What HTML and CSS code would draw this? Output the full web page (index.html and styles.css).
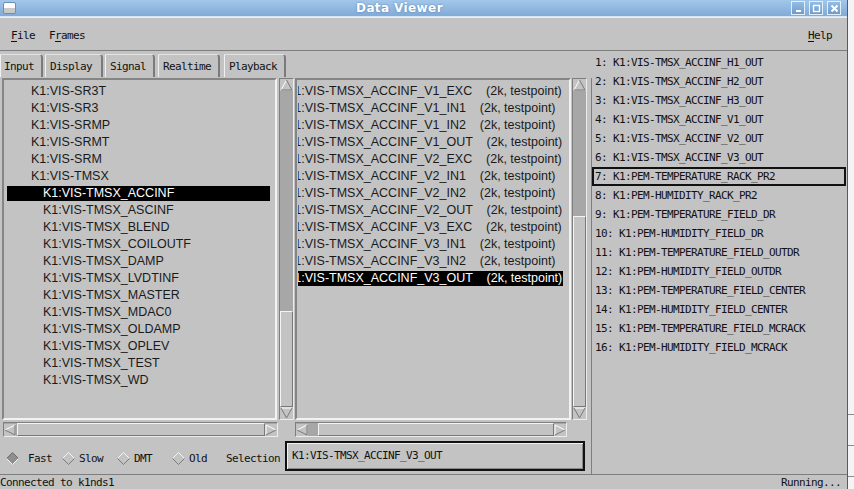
FILE: index.html
```html
<!DOCTYPE html>
<html>
<head>
  <meta charset="UTF-8">
  <link rel="stylesheet" href="styles.css">
</head>
<body>
  <div class="window">
    <div class="titlebar">
      <span class="winmenu"></span>
      <span class="title">Data Viewer</span>
      <span class="winbtns">
        <span class="wbtn"><svg width="11" height="11" viewBox="0 0 11 11"><rect x="3" y="7" width="5" height="2" fill="#fff"/></svg></span>
        <span class="wbtn"><svg width="11" height="11" viewBox="0 0 11 11"><rect x="2.5" y="2.5" width="6" height="6" fill="none" stroke="#fff" stroke-width="1.4"/></svg></span>
        <span class="wbtn"><svg width="11" height="11" viewBox="0 0 11 11"><path d="M2.5 2.5 L8.5 8.5 M8.5 2.5 L2.5 8.5" stroke="#fff" stroke-width="2"/></svg></span>
      </span>
    </div>

    <div class="menubar">
      <span class="menu"><u>F</u>ile</span>
      <span class="menu">F<u>r</u>ames</span>
      <span class="spacer"></span>
      <span class="menu"><u>H</u>elp</span>
    </div>

    <div class="main">
      <div class="leftside">
        <div class="tabs">
          <span class="tab">Input</span>
          <span class="tab">Display</span>
          <span class="tab active">Signal</span>
          <span class="tab">Realtime</span>
          <span class="tab">Playback</span>
        </div>

        <div class="lists">
          <div class="list channels">
            <div class="row">K1:VIS-SR3T</div>
            <div class="row">K1:VIS-SR3</div>
            <div class="row">K1:VIS-SRMP</div>
            <div class="row">K1:VIS-SRMT</div>
            <div class="row">K1:VIS-SRM</div>
            <div class="row">K1:VIS-TMSX</div>
            <div class="row child selected">K1:VIS-TMSX_ACCINF</div>
            <div class="row child">K1:VIS-TMSX_ASCINF</div>
            <div class="row child">K1:VIS-TMSX_BLEND</div>
            <div class="row child">K1:VIS-TMSX_COILOUTF</div>
            <div class="row child">K1:VIS-TMSX_DAMP</div>
            <div class="row child">K1:VIS-TMSX_LVDTINF</div>
            <div class="row child">K1:VIS-TMSX_MASTER</div>
            <div class="row child">K1:VIS-TMSX_MDAC0</div>
            <div class="row child">K1:VIS-TMSX_OLDAMP</div>
            <div class="row child">K1:VIS-TMSX_OPLEV</div>
            <div class="row child">K1:VIS-TMSX_TEST</div>
            <div class="row child">K1:VIS-TMSX_WD</div>
          </div>

          <div class="vscroll">
            <span class="arrow"><svg width="13" height="12" viewBox="0 0 13 12"><polygon points="6.5,1 12,11 1,11" fill="#c3c3c3"/><polyline points="1,11 6.5,1" fill="none" stroke="#fff"/><polyline points="6.5,1 12,11 1,11" fill="none" stroke="#7a7a7a"/></svg></span>
            <span class="trough"></span>
            <span class="thumb" style="height: 96px"></span>
            <span class="arrow"><svg width="13" height="12" viewBox="0 0 13 12"><polygon points="1,1 12,1 6.5,11" fill="#c3c3c3"/><polyline points="1,1 12,1" fill="none" stroke="#fff"/><polyline points="1,1 6.5,11 12,1" fill="none" stroke="#7a7a7a"/></svg></span>
          </div>

          <div class="list signals">
            <div class="row">K1:VIS-TMSX_ACCINF_V1_EXC    (2k, testpoint)</div>
            <div class="row">K1:VIS-TMSX_ACCINF_V1_IN1    (2k, testpoint)</div>
            <div class="row">K1:VIS-TMSX_ACCINF_V1_IN2    (2k, testpoint)</div>
            <div class="row">K1:VIS-TMSX_ACCINF_V1_OUT    (2k, testpoint)</div>
            <div class="row">K1:VIS-TMSX_ACCINF_V2_EXC    (2k, testpoint)</div>
            <div class="row">K1:VIS-TMSX_ACCINF_V2_IN1    (2k, testpoint)</div>
            <div class="row">K1:VIS-TMSX_ACCINF_V2_IN2    (2k, testpoint)</div>
            <div class="row">K1:VIS-TMSX_ACCINF_V2_OUT    (2k, testpoint)</div>
            <div class="row">K1:VIS-TMSX_ACCINF_V3_EXC    (2k, testpoint)</div>
            <div class="row">K1:VIS-TMSX_ACCINF_V3_IN1    (2k, testpoint)</div>
            <div class="row">K1:VIS-TMSX_ACCINF_V3_IN2    (2k, testpoint)</div>
            <div class="row selected">K1:VIS-TMSX_ACCINF_V3_OUT    (2k, testpoint)</div>
          </div>

          <div class="vscroll">
            <span class="arrow"><svg width="13" height="12" viewBox="0 0 13 12"><polygon points="6.5,1 12,11 1,11" fill="#c3c3c3"/><polyline points="1,11 6.5,1" fill="none" stroke="#fff"/><polyline points="6.5,1 12,11 1,11" fill="none" stroke="#7a7a7a"/></svg></span>
            <span class="trough"></span>
            <span class="thumb" style="height: 191px"></span>
            <span class="arrow"><svg width="13" height="12" viewBox="0 0 13 12"><polygon points="1,1 12,1 6.5,11" fill="#c3c3c3"/><polyline points="1,1 12,1" fill="none" stroke="#fff"/><polyline points="1,1 6.5,11 12,1" fill="none" stroke="#7a7a7a"/></svg></span>
          </div>

          <div class="hscroll left-h">
            <span class="arrow"><svg width="12" height="12" viewBox="0 0 12 12"><polygon points="1,6 11,1 11,11" fill="#c3c3c3"/><polyline points="11,1 1,6" fill="none" stroke="#fff"/><polyline points="1,6 11,11 11,1" fill="none" stroke="#7a7a7a"/></svg></span>
            <span class="trough" style="flex: 0 0 1px"></span>
            <span class="thumb"></span>
            <span class="arrow"><svg width="12" height="12" viewBox="0 0 12 12"><polygon points="1,1 11,6 1,11" fill="#c3c3c3"/><polyline points="1,11 1,1 11,6" fill="none" stroke="#fff"/><polyline points="11,6 1,11" fill="none" stroke="#7a7a7a"/></svg></span>
          </div>

          <div class="hscroll mid-h">
            <span class="arrow"><svg width="12" height="12" viewBox="0 0 12 12"><polygon points="1,6 11,1 11,11" fill="#c3c3c3"/><polyline points="11,1 1,6" fill="none" stroke="#fff"/><polyline points="1,6 11,11 11,1" fill="none" stroke="#7a7a7a"/></svg></span>
            <span class="trough" style="flex: 0 0 10px"></span>
            <span class="thumb"></span>
            <span class="arrow"><svg width="12" height="12" viewBox="0 0 12 12"><polygon points="1,1 11,6 1,11" fill="#c3c3c3"/><polyline points="1,11 1,1 11,6" fill="none" stroke="#fff"/><polyline points="11,6 1,11" fill="none" stroke="#7a7a7a"/></svg></span>
          </div>
        </div>

        <div class="controls">
          <span class="radio on">
            <svg width="13" height="13" viewBox="0 0 13 13"><polygon points="6.5,0.5 12.5,6.5 6.5,12.5 0.5,6.5" fill="#8e8e8e"/><polyline points="0.5,6.5 6.5,0.5 12.5,6.5" fill="none" stroke="#6e6e6e"/><polyline points="0.5,6.5 6.5,12.5 12.5,6.5" fill="none" stroke="#f4f4f4"/></svg>
            Fast
          </span>
          <span class="radio">
            <svg width="13" height="13" viewBox="0 0 13 13"><polygon points="6.5,0.5 12.5,6.5 6.5,12.5 0.5,6.5" fill="#c3c3c3"/><polyline points="0.5,6.5 6.5,0.5 12.5,6.5" fill="none" stroke="#f4f4f4"/><polyline points="0.5,6.5 6.5,12.5 12.5,6.5" fill="none" stroke="#7a7a7a"/></svg>
            Slow
          </span>
          <span class="radio">
            <svg width="13" height="13" viewBox="0 0 13 13"><polygon points="6.5,0.5 12.5,6.5 6.5,12.5 0.5,6.5" fill="#c3c3c3"/><polyline points="0.5,6.5 6.5,0.5 12.5,6.5" fill="none" stroke="#f4f4f4"/><polyline points="0.5,6.5 6.5,12.5 12.5,6.5" fill="none" stroke="#7a7a7a"/></svg>
            DMT
          </span>
          <span class="radio">
            <svg width="13" height="13" viewBox="0 0 13 13"><polygon points="6.5,0.5 12.5,6.5 6.5,12.5 0.5,6.5" fill="#c3c3c3"/><polyline points="0.5,6.5 6.5,0.5 12.5,6.5" fill="none" stroke="#f4f4f4"/><polyline points="0.5,6.5 6.5,12.5 12.5,6.5" fill="none" stroke="#7a7a7a"/></svg>
            Old
          </span>
          <span class="sel-label">Selection</span>
          <div class="sel-box">K1:VIS-TMSX_ACCINF_V3_OUT</div>
        </div>
      </div>

      <div class="picked">
        <div class="prow">1: K1:VIS-TMSX_ACCINF_H1_OUT</div>
        <div class="prow">2: K1:VIS-TMSX_ACCINF_H2_OUT</div>
        <div class="prow">3: K1:VIS-TMSX_ACCINF_H3_OUT</div>
        <div class="prow">4: K1:VIS-TMSX_ACCINF_V1_OUT</div>
        <div class="prow">5: K1:VIS-TMSX_ACCINF_V2_OUT</div>
        <div class="prow">6: K1:VIS-TMSX_ACCINF_V3_OUT</div>
        <div class="prow boxed">7: K1:PEM-TEMPERATURE_RACK_PR2</div>
        <div class="prow">8: K1:PEM-HUMIDITY_RACK_PR2</div>
        <div class="prow">9: K1:PEM-TEMPERATURE_FIELD_DR</div>
        <div class="prow">10: K1:PEM-HUMIDITY_FIELD_DR</div>
        <div class="prow">11: K1:PEM-TEMPERATURE_FIELD_OUTDR</div>
        <div class="prow">12: K1:PEM-HUMIDITY_FIELD_OUTDR</div>
        <div class="prow">13: K1:PEM-TEMPERATURE_FIELD_CENTER</div>
        <div class="prow">14: K1:PEM-HUMIDITY_FIELD_CENTER</div>
        <div class="prow">15: K1:PEM-TEMPERATURE_FIELD_MCRACK</div>
        <div class="prow">16: K1:PEM-HUMIDITY_FIELD_MCRACK</div>
      </div>
    </div>

    <div class="statusbar">
      <span>Connected to k1nds1</span>
      <span>Running...</span>
    </div>
  </div>
  <div class="desk"></div>
</body>
</html>
```

FILE: styles.css
```css
* {
  margin: 0;
  padding: 0;
  box-sizing: border-box;
}

body {
  width: 854px;
  height: 489px;
  overflow: hidden;
  display: flex;
  background: #f2f2f2;
  font-family: "DejaVu Sans Mono", monospace;
  font-size: 11px;
  letter-spacing: -0.62px;
  color: #111;
}

.window {
  width: 848px;
  height: 489px;
  flex: 0 0 848px;
  display: flex;
  flex-direction: column;
  background: #c3c3c3;
  border-right: 1px solid #5a5a5a;
}

.desk {
  flex: 1;
  background:
    linear-gradient(#8a8a8a, #8a8a8a) 0 414px / 100% 1px no-repeat,
    linear-gradient(#8a8a8a, #8a8a8a) 0 445px / 100% 1px no-repeat,
    linear-gradient(#8a8a8a, #8a8a8a) 0 476px / 100% 1px no-repeat,
    #f4f4f4;
}

/* title bar */
.titlebar {
  height: 17px;
  flex: 0 0 17px;
  display: flex;
  align-items: center;
  background: linear-gradient(#a3c7ea, #80aad8);
  border-bottom: 1px solid #d8e6f3;
}

.winmenu {
  width: 13px;
  height: 12px;
  margin-left: 3px;
  border-radius: 2px;
  background: linear-gradient(#ffffff 55%, #c9c9c9 55%);
  border: 1px solid #6d8fb3;
}

.title {
  flex: 1;
  text-align: center;
  font-family: "DejaVu Sans", sans-serif;
  font-weight: bold;
  font-size: 12px;
  letter-spacing: 0.4px;
  color: #fff;
  text-shadow: 0 0 2px rgba(40, 80, 130, 0.6);
  padding-right: 8px;
}

.winbtns {
  display: flex;
  gap: 4px;
  margin-right: 6px;
}

.wbtn {
  width: 14px;
  height: 14px;
  display: flex;
  align-items: center;
  justify-content: center;
  background: linear-gradient(#94bde6, #6f9acb);
  border: 1px solid #e4eef8;
}

/* menu bar */
.menubar {
  height: 34px;
  flex: 0 0 34px;
  display: flex;
  align-items: center;
  padding: 3px 15px 0 11px;
  gap: 14px;
  border-top: 1px solid #ececec;
  border-bottom: 1px solid #7e7e7e;
}

.menu u {
  text-decoration-thickness: 1px;
  text-underline-offset: 2px;
}

.spacer {
  flex: 1;
}

/* main area */
.main {
  flex: 1;
  display: flex;
  min-height: 0;
}

.leftside {
  width: 590px;
  flex: 0 0 590px;
  display: flex;
  flex-direction: column;
}

.tabs {
  height: 27px;
  flex: 0 0 27px;
  display: flex;
  align-items: flex-end;
  gap: 2px;
  padding-bottom: 1px;
}

.tab {
  height: 23px;
  line-height: 23px;
  padding: 0 7px 0 4px;
  border-left: 1px solid #f0f0f0;
  border-top: 1px solid #e4e4e4;
  border-right: 2px solid #7a7a7a;
  border-top-right-radius: 4px;
}

.tab:nth-child(1) {
  padding-left: 3px;
}

.tab:nth-child(2) {
  padding-right: 9px;
}

.tab:nth-child(4) {
  margin-left: 1px;
}

.tab:nth-child(5) {
  margin-left: 2px;
}

.lists {
  display: grid;
  grid-template-columns: 276px 15px 276px 15px;
  grid-template-rows: 342px 15px;
  column-gap: 1px;
  row-gap: 2px;
  padding-left: 2px;
}

.list {
  border: 2px solid;
  border-color: #858585 #f2f2f2 #f2f2f2 #858585;
  padding-top: 4px;
  overflow: hidden;
  font-family: "Liberation Sans", Arial, sans-serif;
  font-size: 12.5px;
  letter-spacing: 0;
  color: #1a1a1a;
}

.channels {
  margin-right: 1px;
}

.row {
  height: 15px;
  line-height: 15px;
  margin-bottom: 2px;
  white-space: pre;
  overflow: hidden;
}

.channels .row {
  margin-left: 3px;
  margin-right: 5px;
  padding-left: 24px;
}

.channels .row.child {
  padding-left: 36px;
}

.signals .row {
  margin-left: 1px;
  margin-right: 6px;
  text-indent: -12px;
}

.row.selected {
  background: #000;
  color: #fff;
}

/* scrollbars */
.vscroll,
.hscroll {
  display: flex;
  background: #a7a7a7;
  border: 1px solid;
  border-color: #7e7e7e #ececec #ececec #7e7e7e;
}

.vscroll {
  flex-direction: column;
  align-items: center;
}

.vscroll .arrow {
  height: 12px;
  flex: 0 0 12px;
  display: flex;
  background: #c3c3c3;
}

.trough {
  flex: 1;
}

.thumb {
  flex: 0 0 auto;
  width: 13px;
  background: #c3c3c3;
  border: 1px solid;
  border-color: #f4f4f4 #777 #777 #f4f4f4;
}

.hscroll {
  align-items: center;
  height: 15px;
}

.hscroll .arrow {
  width: 12px;
  flex: 0 0 12px;
  display: flex;
  background: #c3c3c3;
}

.hscroll .thumb {
  flex: 1;
  width: auto;
  height: 13px;
}

.left-h {
  grid-column: 1;
  margin-left: 1px;
}

.mid-h {
  grid-column: 3;
  margin-right: 4px;
}

/* bottom controls */
.controls {
  flex: 1;
  display: flex;
  align-items: center;
  padding-left: 6px;
}

.radio {
  width: 55px;
  display: flex;
  align-items: center;
  gap: 4px;
  padding-top: 6px;
}

.radio.on {
  width: 56px;
  gap: 9px;
}

.sel-label {
  margin-left: -1px;
  padding-top: 6px;
}

.sel-box {
  width: 300px;
  height: 30px;
  margin-left: 5px;
  padding-left: 5px;
  display: flex;
  align-items: center;
  border: 2px solid #111;
  box-shadow: inset 1px 1px 0 #f0f0f0, inset -1px -1px 0 #888;
}

/* selected channels */
.picked {
  flex: 1;
  position: relative;
  padding-top: 2px;
}

.picked::before {
  content: '';
  position: absolute;
  left: 1px;
  top: 27px;
  bottom: 0;
  border-left: 1px solid #7e7e7e;
}

.prow {
  height: 19px;
  line-height: 19px;
  margin: 0 1px 0 2px;
  padding-left: 3px;
  white-space: pre;
}

.prow.boxed {
  box-shadow: inset 0 0 0 2px #111;
}

/* status bar */
.statusbar {
  height: 15px;
  flex: 0 0 15px;
  display: flex;
  justify-content: space-between;
  align-items: flex-start;
  border-top: 1px solid #7e7e7e;
  padding: 1px 6px 0 0;
  line-height: 14px;
}
```
